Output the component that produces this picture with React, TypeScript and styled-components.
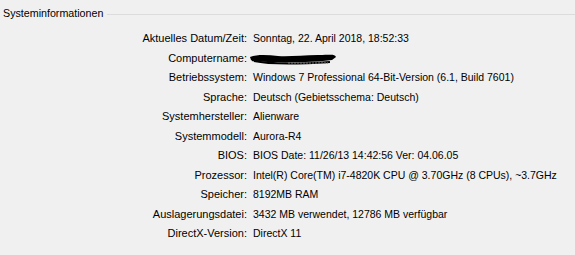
import styled, { createGlobalStyle } from 'styled-components';

const GlobalStyle = createGlobalStyle`
  html, body {
    margin: 0;
    padding: 0;
    background: #f0f0f0;
  }
  body {
    font-family: "Liberation Sans", Arial, sans-serif;
    font-size: 11px;
    color: #000;
  }
`;

const Panel = styled.div`
  width: 575px;
  height: 255px;
  background: #f0f0f0;
  overflow: hidden;
`;

const GroupHeader = styled.div`
  display: flex;
  align-items: center;
  gap: 4px;
  padding: 7px 0 0 3px;
  line-height: 13px;
`;

const GroupTitle = styled.span`
  white-space: nowrap;
  font-size: 10.7px;
`;

const Rule = styled.div`
  flex: 1;
  height: 0;
  border-top: 1px solid #dcdcdc;
  margin-top: 1px;
`;

const InfoGrid = styled.div`
  display: grid;
  grid-template-columns: 247px 1fr;
  column-gap: 6px;
  margin-top: 9px;
  line-height: 19.5px;
`;

const Label = styled.div`
  text-align: right;
  white-space: nowrap;
`;

const Value = styled.div`
  white-space: nowrap;
  font-size: 10.5px;
`;

const Redacted = styled.svg`
  display: block;
  margin: 3px 0 0 -5px;
`;

const rows: [string, string | null][] = [
  ['Aktuelles Datum/Zeit:', 'Sonntag, 22. April 2018, 18:52:33'],
  ['Computername:', null],
  ['Betriebssystem:', 'Windows 7 Professional 64-Bit-Version (6.1, Build 7601)'],
  ['Sprache:', 'Deutsch (Gebietsschema: Deutsch)'],
  ['Systemhersteller:', 'Alienware'],
  ['Systemmodell:', 'Aurora-R4'],
  ['BIOS:', 'BIOS Date: 11/26/13 14:42:56 Ver: 04.06.05'],
  ['Prozessor:', 'Intel(R) Core(TM) i7-4820K CPU @ 3.70GHz (8 CPUs), ~3.7GHz'],
  ['Speicher:', '8192MB RAM'],
  ['Auslagerungsdatei:', '3432 MB verwendet, 12786 MB verfügbar'],
  ['DirectX-Version:', 'DirectX 11'],
];

function Scribble() {
  return (
    <Redacted width="92" height="14" viewBox="0 0 92 14">
      <path
        d="M2 5 C 10 2, 20 3, 30 4 S 55 3, 70 3 S 86 2, 88 5 L 84 8 C 70 10, 40 11, 20 10 S 6 10, 3 8 Z"
        fill="#000"
      />
      <path d="M6 9 C 20 12, 50 12, 82 10" stroke="#000" strokeWidth="2" fill="none" />
      <path d="M40 11 L 80 11" stroke="#777" strokeWidth="1" strokeDasharray="2 1" />
    </Redacted>
  );
}

export default function App() {
  return (
    <>
      <GlobalStyle />
      <Panel>
        <GroupHeader>
          <GroupTitle>Systeminformationen</GroupTitle>
          <Rule />
        </GroupHeader>
        <InfoGrid>
          {rows.map(([label, value]) => (
            <>
              <Label key={label}>{label}</Label>
              <Value key={label + '-v'}>{value ?? <Scribble />}</Value>
            </>
          ))}
        </InfoGrid>
      </Panel>
    </>
  );
}
